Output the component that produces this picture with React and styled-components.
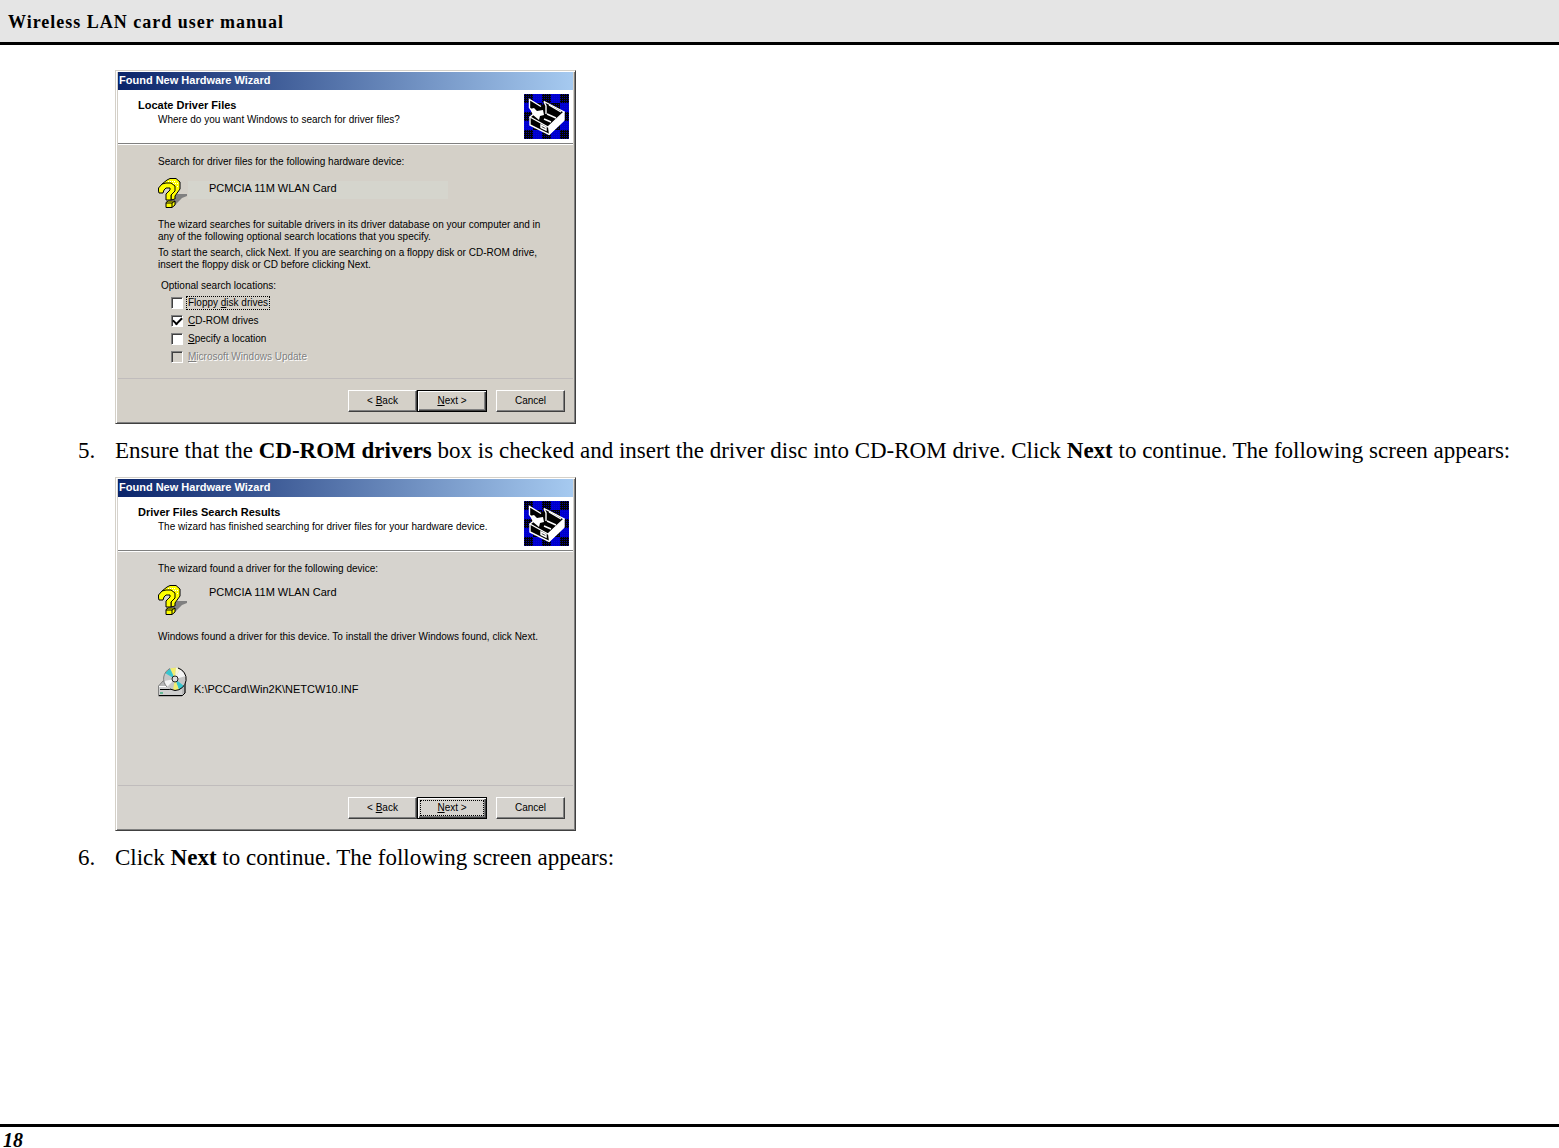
import React from "react";
import styled, { createGlobalStyle } from "styled-components";

const GlobalStyle = createGlobalStyle`
  * {
    box-sizing: border-box;
  }
  body {
    margin: 0;
    background: #fff;
    color: #000;
    font-family: "Liberation Serif", "Times New Roman", serif;
  }
`;

const Page = styled.div`
  min-height: 100vh;
  display: flex;
  flex-direction: column;
`;

const Header = styled.header`
  padding: 12px 8px 10px;
  background: #e5e5e5;
  border-bottom: 3px solid #000;
  h1 {
    margin: 0;
    font-size: 18px;
    line-height: 20px;
    letter-spacing: 1px;
  }
`;

const Content = styled.main`
  flex: 1;
  padding: 25px 0 25px 78px;
`;

const Figure = styled.div`
  margin-left: 37px;
`;

const Step = styled.div`
  display: grid;
  grid-template-columns: 37px 1fr;
  padding: 13px 0;
  font-size: 23px;
  line-height: 27px;
  p {
    margin: 0;
  }
`;

const Footer = styled.footer`
  border-top: 3px solid #000;
  padding: 5px 3px 0;
  font-size: 20px;
  line-height: 16px;
  font-weight: bold;
  font-style: italic;
`;

const Dialog = styled.section`
  width: 461px;
  min-height: 354px;
  display: flex;
  flex-direction: column;
  padding: 1px 2px 1px 2px;
  border: 1px solid #404040;
  border-top-color: #d4d0c8;
  border-left-color: #d4d0c8;
  box-shadow: inset 1px 1px 0 #fff, inset -1px -1px 0 #808080;
  background: ${(props) => props.$face};
  font-family: "Liberation Sans", Arial, sans-serif;
  font-size: 10px;
  line-height: 12px;
`;

const TitleBar = styled.div`
  height: 18px;
  padding: 0 1px;
  background: linear-gradient(to right, #0a246a, #a6caf0);
  color: #fff;
  font-size: 11px;
  font-weight: bold;
  line-height: 17px;
`;

const Banner = styled.div`
  display: flex;
  justify-content: space-between;
  padding: 4px 4px 4px 20px;
  background: #fff;
  border-bottom: 1px solid #808080;
  box-shadow: 0 1px 0 #fff;
  h2 {
    margin: 5px 0 3px;
    font-size: 11px;
    line-height: 12px;
  }
  p {
    margin: 0 0 0 20px;
  }
`;

const Body = styled.div`
  flex: 1;
  padding: 12px 20px 0 40px;
  p {
    margin: 0;
  }
`;

const DeviceRow = styled.div`
  display: flex;
  align-items: flex-start;
  margin-top: ${(props) => props.$top};
`;

const DeviceName = styled.span`
  flex: 0 0 260px;
  margin-top: ${(props) => props.$drop};
  padding-left: ${(props) => props.$indent};
  padding-bottom: 4px;
  background: ${(props) => props.$patch};
  font-size: 11px;
  line-height: 14px;
`;

const Paragraph = styled.p`
  && {
    margin-top: ${(props) => props.$top};
  }
`;

const Locations = styled.fieldset`
  margin: 9px 0 0;
  padding: 0 0 0 13px;
  border: 0;
  legend {
    margin-left: -10px;
    margin-bottom: 2px;
    padding: 0;
  }
`;

const Option = styled.label`
  display: flex;
  align-items: center;
  gap: 4px;
  height: 18px;
  color: ${(props) => (props.$disabled ? "#808080" : "#000")};
  text-shadow: ${(props) => (props.$disabled ? "1px 1px 0 #fff" : "none")};
  span {
    padding: 0 1px;
    outline: ${(props) => (props.$focused ? "1px dotted #000" : "none")};
  }
`;

const Checkbox = styled.input`
  appearance: none;
  width: 12px;
  height: 12px;
  margin: 0;
  display: grid;
  place-items: center;
  background: #fff;
  border: 1px solid #fff;
  border-top-color: #808080;
  border-left-color: #808080;
  box-shadow: inset 1px 1px 0 #404040;
  &:disabled {
    background: #d4d0c8;
  }
  &:checked::after {
    content: "";
    width: 7px;
    height: 4px;
    border: 2px solid #000;
    border-top: 0;
    border-right: 0;
    transform: rotate(-45deg);
    margin-bottom: 2px;
  }
`;

const Actions = styled.div`
  display: flex;
  justify-content: flex-end;
  padding: 11px 8px 10px;
  border-top: 1px solid #c0bcbc;
`;

const Button = styled.button`
  width: ${(props) => (props.$primary ? "70px" : "69px")};
  height: 22px;
  padding: 0;
  margin-left: ${(props) => (props.$apart ? "9px" : "0")};
  background: transparent;
  border: 1px solid #404040;
  border-color: ${(props) =>
    props.$primary ? "#000" : "#fff #404040 #404040 #fff"};
  box-shadow: ${(props) =>
    props.$primary
      ? "inset 1px 1px 0 #fff, inset -1px -1px 0 #404040, inset -2px -2px 0 #808080"
      : "inset -1px -1px 0 #808080"};
  color: #000;
  font: inherit;
  span {
    display: block;
    margin: 0 3px;
    padding: 1px 0;
    outline: ${(props) => (props.$focused ? "1px dotted #000" : "none")};
  }
`;

// blue dots on black, with denser squares every other cell
const CELL = 9;
let dots = "";
let squares = "";
for (let y = 0; y < 45; y += 2) {
  for (let x = 0; x < 45; x += 2) {
    dots += `M${x} ${y}h1v1h-1z`;
  }
}
for (let row = 0; row < 5; row++) {
  for (let col = 0; col < 5; col++) {
    if ((row + col) % 2 === 1) {
      squares += `M${col * CELL} ${row * CELL}h${CELL}v${CELL}h-${CELL}z`;
    }
  }
}

const HardwareIcon = () => (
  <svg width="45" height="45" viewBox="0 0 45 45" aria-hidden="true">
    <rect width="45" height="45" fill="#000" />
    <path d={squares} fill="#0000c8" />
    <path d={dots} fill="#00f" opacity="0.6" shapeRendering="crispEdges" />
    <path d="M5 5 17 12 22 7 40 18V26L25 40 6 31V23L11 20 5 14Z" fill="#000" />
    <g fill="none" stroke="#fff" strokeWidth="1.4">
      <path d="M5.500 14V5.500L17 12.500M20 7.500 40 18 24 33 6 23 11 19 5.500 14" />
      <path d="M6 23V31L25 40.500 40 26V18" />
      <path d="M20 7.500 22 12V20M25 11 37 18M20 25 27 28M23 20 32 24" />
      <path d="M17 31 22 33.500V36L17 33.500Z" />
    </g>
    <path d="M24 33 40 18V27L25 41Z" fill="#fff" />
    <path d="M6 15 10 14 13 17 19 16 20 21 16 22 15 26 9 21Z" fill="#fff" />
  </svg>
);

const QuestionIcon = () => (
  <svg width="30" height="30" viewBox="0 0 30 30" aria-hidden="true">
    <path d="M17 18 19 16H29V18L24 20 17 27Z" fill="#808080" />
    <path
      d="M4 6 9 2 12 .5H18L22 4V11L17 18V21L13 22V8Z"
      fill="#ff0"
      stroke="#000"
    />
    <path
      d="M.5 13V10L4 6 8 5H13L17 8V13L13 17V22H8V16L12 12V10H8L6 12 5 15H1Z"
      fill="#ff0"
      stroke="#000"
    />
    <path d="M8 24.500 10 23H17V27L14 29.500H8Z" fill="#ff0" stroke="#000" />
    <path d="M8 25H14V29M14 25 17 23" fill="none" stroke="#000" />
    <path
      d="M10 3.500H18M15 5.500H20M19 8.500H21"
      stroke="#fff"
      strokeDasharray="1 1"
    />
  </svg>
);

const DiscIcon = () => (
  <svg width="30" height="30" viewBox="0 0 30 30" aria-hidden="true">
    <path d="M.5 19 5 14H27V26L24 29H.5Z" fill="#b8b8b8" stroke="#808080" />
    <path d="M1 20H24V28H1Z" fill="#cfcfcf" />
    <path d="M1 19.500H12" stroke="#fff" />
    <path d="M1 28.500H24.500L27 26V16M2 22.500H17" fill="none" stroke="#000" />
    <path d="M2 26H5" stroke="#00a060" />
    <circle cx="17" cy="12" r="11.500" fill="#c6c6c6" />
    <path d="M17 12 12 1.500 18 .5Z" fill="#f2ee70" />
    <path d="M17 12 18 .5 22 2Z" fill="#f7f7d8" />
    <path d="M17 12 7 6 12 1.500Z" fill="#38c5ce" />
    <path d="M17 12 22 2 28 9Z" fill="#f4f4f4" />
    <path d="M17 12 26 19 21 23Z" fill="#38c5ce" />
    <path d="M17 12 21 23 15 23Z" fill="#f2ee70" />
    <path d="M17 12 6 14 9 20Z" fill="#f4f4f4" />
    <path
      d="M20 1A11.500 11.500 0 0 1 17 23.500L12 22"
      fill="none"
      stroke="#000"
    />
    <path d="M12 1.500A11.500 11.500 0 0 0 9 20" fill="none" stroke="#808080" />
    <circle cx="17" cy="12" r="3" fill="#ddd" stroke="#222" />
  </svg>
);

const Wizard = (props) => {
  const { heading, summary, face, nextFocused, children } = props;
  return (
    <Dialog $face={face} aria-label={heading}>
      <TitleBar>Found New Hardware Wizard</TitleBar>
      <Banner>
        <div>
          <h2>{heading}</h2>
          <p>{summary}</p>
        </div>
        <HardwareIcon />
      </Banner>
      <Body>{children}</Body>
      <Actions>
        <Button type="button">
          &lt; <u>B</u>ack
        </Button>
        <Button type="button" $primary $focused={nextFocused}>
          <span>
            <u>N</u>ext &gt;
          </span>
        </Button>
        <Button type="button" $apart>
          Cancel
        </Button>
      </Actions>
    </Dialog>
  );
};

const App = () => {
  return (
    <Page>
      <GlobalStyle />
      <Header>
        <h1>Wireless LAN card user manual</h1>
      </Header>
      <Content>
        <Figure>
          <Wizard
            heading="Locate Driver Files"
            summary="Where do you want Windows to search for driver files?"
            face="#d4d0c8"
          >
            <p>Search for driver files for the following hardware device:</p>
            <DeviceRow $top="10px">
              <QuestionIcon />
              <DeviceName $drop="3px" $indent="21px" $patch="#d5d5cd">
                PCMCIA 11M WLAN Card
              </DeviceName>
            </DeviceRow>
            <Paragraph $top="11px">
              The wizard searches for suitable drivers in its driver database on
              your computer and in
              <br />
              any of the following optional search locations that you specify.
            </Paragraph>
            <Paragraph $top="4px">
              To start the search, click Next. If you are searching on a floppy
              disk or CD-ROM drive,
              <br />
              insert the floppy disk or CD before clicking Next.
            </Paragraph>
            <Locations>
              <legend>Optional search locations:</legend>
              <Option $focused>
                <Checkbox type="checkbox" />
                <span>
                  Floppy <u>d</u>isk drives
                </span>
              </Option>
              <Option>
                <Checkbox type="checkbox" defaultChecked />
                <span>
                  <u>C</u>D-ROM drives
                </span>
              </Option>
              <Option>
                <Checkbox type="checkbox" />
                <span>
                  <u>S</u>pecify a location
                </span>
              </Option>
              <Option $disabled>
                <Checkbox type="checkbox" disabled />
                <span>
                  <u>M</u>icrosoft Windows Update
                </span>
              </Option>
            </Locations>
          </Wizard>
        </Figure>
        <Step>
          <span>5.</span>
          <p>
            Ensure that the <b>CD-ROM drivers</b> box is checked and insert the
            driver disc into CD-ROM drive. Click <b>Next</b> to continue. The
            following screen appears:
          </p>
        </Step>
        <Figure>
          <Wizard
            heading="Driver Files Search Results"
            summary="The wizard has finished searching for driver files for your hardware device."
            face="#d6d3ce"
            nextFocused
          >
            <p>The wizard found a driver for the following device:</p>
            <DeviceRow $top="10px">
              <QuestionIcon />
              <DeviceName $drop="0" $indent="21px" $patch="transparent">
                PCMCIA 11M WLAN Card
              </DeviceName>
            </DeviceRow>
            <Paragraph $top="16px">
              Windows found a driver for this device. To install the driver
              Windows found, click Next.
            </Paragraph>
            <DeviceRow $top="24px">
              <DiscIcon />
              <DeviceName $drop="15px" $indent="6px" $patch="transparent">
                K:\PCCard\Win2K\NETCW10.INF
              </DeviceName>
            </DeviceRow>
          </Wizard>
        </Figure>
        <Step>
          <span>6.</span>
          <p>
            Click <b>Next</b> to continue. The following screen appears:
          </p>
        </Step>
      </Content>
      <Footer>18</Footer>
    </Page>
  );
};

export default App;
